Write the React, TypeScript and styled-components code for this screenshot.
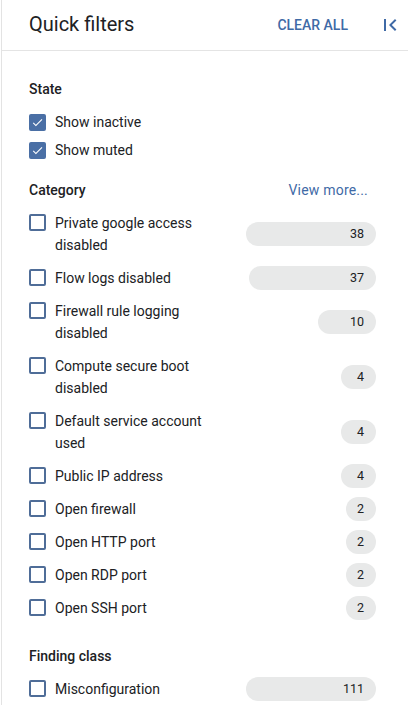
import React from "react";
import styled, { createGlobalStyle } from "styled-components";

const GlobalStyle = createGlobalStyle`
  html, body {
    margin: 0;
    padding: 0;
    background: #ffffff;
  }
  body {
    font-family: Roboto, "Liberation Sans", Arial, sans-serif;
    color: #202124;
    -webkit-font-smoothing: antialiased;
  }
`;

const BLUE = "#3f6aa6";

const Panel = styled.div`
  margin-left: 1px;
  border-left: 1px solid #e3e3e3;
  height: 705px;
  overflow: hidden;
  box-sizing: border-box;
  background: #fff;
`;

const Header = styled.header`
  display: flex;
  align-items: center;
  height: 50px;
  padding: 0 6px 0 27px;
  border-bottom: 1px solid #e4e4e4;
`;

const Title = styled.h1`
  flex: 1;
  margin: 0;
  font-size: 20px;
  font-weight: 400;
  line-height: 24px;
  color: #202124;
  margin-top: -2px;
`;

const TextButton = styled.button<{ $caps?: boolean }>`
  border: 0;
  background: transparent;
  padding: 0 8px;
  font-family: inherit;
  font-size: 14px;
  font-weight: ${(p) => (p.$caps ? 500 : 400)};
  text-transform: ${(p) => (p.$caps ? "uppercase" : "none")};
  letter-spacing: ${(p) => (p.$caps ? "0" : "0.2px")};
  line-height: 20px;
  color: ${BLUE};
  cursor: pointer;
`;

const IconButton = styled.button`
  border: 0;
  background: transparent;
  padding: 0;
  width: 24px;
  height: 24px;
  margin-left: 22px;
  display: flex;
  align-items: center;
  justify-content: center;
  color: ${BLUE};
  cursor: pointer;
`;

const Content = styled.div`
  padding: 0 32px 0 27px;
`;

const Section = styled.section<{ $top: number }>`
  margin-top: ${(p) => p.$top}px;
`;

const SectionHead = styled.div<{ $after: number }>`
  display: flex;
  align-items: center;
  justify-content: space-between;
  height: 20px;
  margin-bottom: ${(p) => p.$after}px;
`;

const SectionTitle = styled.h2`
  margin: 0;
  font-size: 14px;
  font-weight: 500;
  line-height: 20px;
  color: #202124;
`;

const StateRow = styled.label`
  display: flex;
  align-items: center;
  height: 28px;
  gap: 9px;
  font-size: 14px;
  line-height: 20px;
  color: #202124;
`;

const FilterRow = styled.label`
  display: flex;
  align-items: flex-start;
  padding: 6px 0 5px;
  font-size: 14px;
  line-height: 22px;
  color: #202124;
`;

const Box = styled.span<{ $checked?: boolean; $offset?: number }>`
  flex: none;
  box-sizing: border-box;
  width: 17px;
  height: 17px;
  margin-top: ${(p) => p.$offset ?? 0}px;
  border: 2px solid ${(p) => (p.$checked ? "#4a6fa5" : "#4f6d98")};
  border-radius: 2px;
  background: ${(p) => (p.$checked ? "#4a6fa5" : "transparent")};
  display: flex;
  align-items: center;
  justify-content: center;
`;

const Label = styled.span`
  flex: none;
  width: 165px;
  margin-left: 9px;
`;

const CountBar = styled.span`
  margin: -1px 0 -1px auto;
  align-self: center;
  box-sizing: border-box;
  height: 24px;
  border-radius: 12px;
  background: #e8e9e9;
  padding-right: 12px;
  text-align: right;
  font-size: 12.5px;
  line-height: 24px;
  color: #202124;
`;

const Checkbox: React.FC<{ checked?: boolean; offset?: number }> = ({ checked, offset }) => (
  <Box $checked={checked} $offset={offset}>
    {checked && (
      <svg width="13" height="13" viewBox="0 0 24 24" aria-hidden>
        <path d="M9 16.17L4.83 12l-1.42 1.41L9 19 21 7l-1.41-1.41z" fill="#fff" />
      </svg>
    )}
  </Box>
);

type Item = { label: string; count: number; width: number };

const categories: Item[] = [
  { label: "Private google access disabled", count: 38, width: 130 },
  { label: "Flow logs disabled", count: 37, width: 127 },
  { label: "Firewall rule logging disabled", count: 10, width: 58 },
  { label: "Compute secure boot disabled", count: 4, width: 35 },
  { label: "Default service account used", count: 4, width: 35 },
  { label: "Public IP address", count: 4, width: 35 },
  { label: "Open firewall", count: 2, width: 30 },
  { label: "Open HTTP port", count: 2, width: 30 },
  { label: "Open RDP port", count: 2, width: 30 },
  { label: "Open SSH port", count: 2, width: 30 },
];

const findingClasses: Item[] = [{ label: "Misconfiguration", count: 111, width: 130 }];

const Filter: React.FC<{ item: Item }> = ({ item }) => (
  <FilterRow>
    <Checkbox offset={2} />
    <Label>{item.label}</Label>
    <CountBar style={{ width: item.width }}>{item.count}</CountBar>
  </FilterRow>
);

export default function App() {
  return (
    <>
      <GlobalStyle />
      <Panel>
        <Header>
          <Title>Quick filters</Title>
          <TextButton $caps>Clear all</TextButton>
          <IconButton aria-label="Collapse">
            <svg width="24" height="24" viewBox="0 0 24 24" aria-hidden>
              <path d="M18.41 16.59L13.82 12l4.59-4.59L17 6l-6 6 6 6zM6 6h2v12H6z" fill="currentColor" />
            </svg>
          </IconButton>
        </Header>
        <Content>
          <Section $top={28}>
            <SectionHead $after={9}>
              <SectionTitle>State</SectionTitle>
            </SectionHead>
            <StateRow>
              <Checkbox checked />
              Show inactive
            </StateRow>
            <StateRow>
              <Checkbox checked />
              Show muted
            </StateRow>
          </Section>
          <Section $top={16}>
            <SectionHead $after={6}>
              <SectionTitle>Category</SectionTitle>
              <TextButton>View more...</TextButton>
            </SectionHead>
            {categories.map((c) => (
              <Filter key={c.label} item={c} />
            ))}
          </Section>
          <Section $top={22}>
            <SectionHead $after={6}>
              <SectionTitle>Finding class</SectionTitle>
            </SectionHead>
            {findingClasses.map((c) => (
              <Filter key={c.label} item={c} />
            ))}
          </Section>
        </Content>
      </Panel>
    </>
  );
}
